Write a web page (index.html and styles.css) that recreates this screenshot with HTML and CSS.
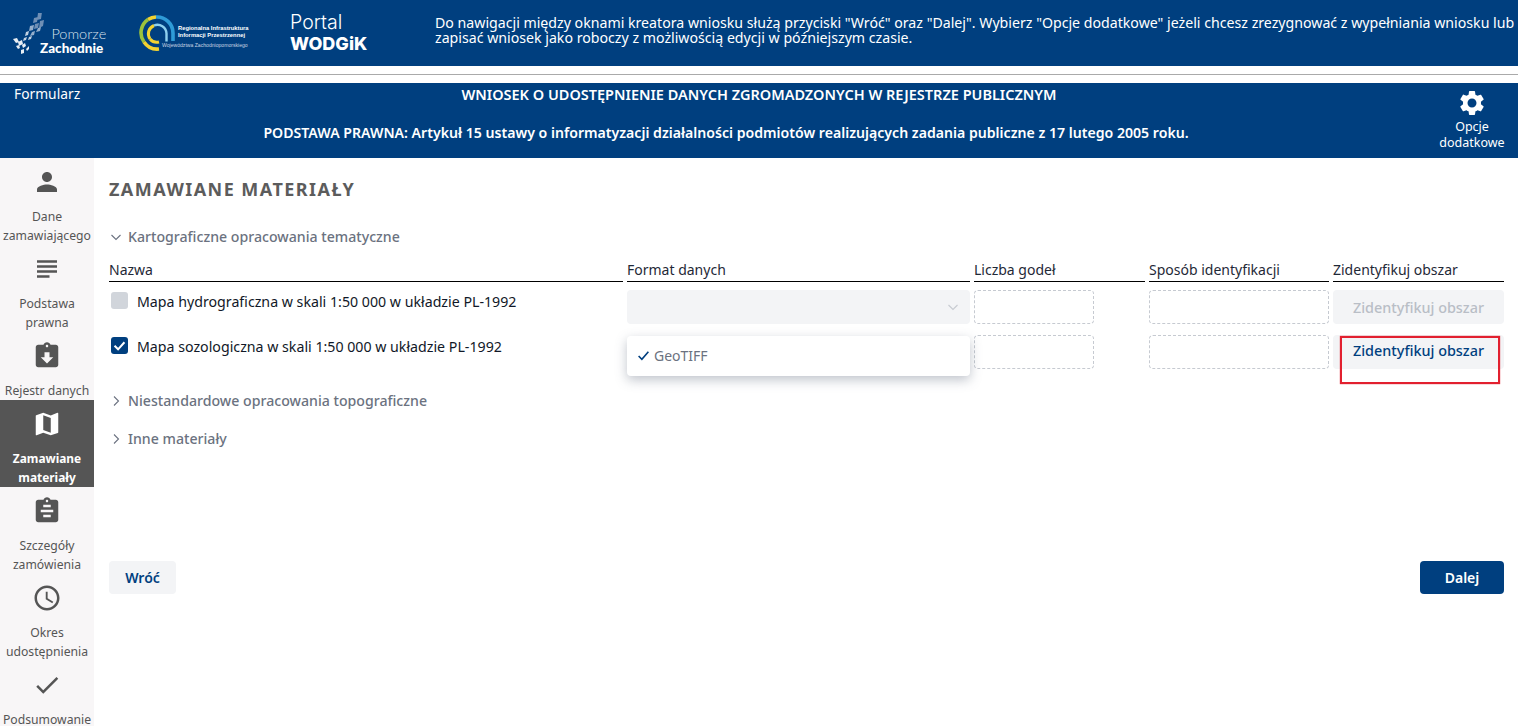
FILE: index.html
```html
<!DOCTYPE html>
<html lang="pl">

<head>
  <meta charset="UTF-8">
  <meta name="viewport" content="width=device-width, initial-scale=1.0">
  <title>Portal WODGiK - Formularz</title>
  <link rel="stylesheet" href="styles.css">
</head>

<body>
  <header class="top">
    <div class="logo-pomorze">
      <svg class="pomorze-mark" viewBox="0 0 32 42" width="32" height="42">
        <path fill="#6f8fb5" d="M25 0l4-1-1 7-4 1zM21 5l4-1-1 5-4 1zM27 8l4-1-1 6-4 2zM22 11l4-1-1 5-4 1z" />
        <path fill="#94aecb" d="M17 13l4-1-1 5-4 1zM25 15l3-1-1 4-4 1zM19 19l3-1-1 4-4 1z" />
        <path fill="#c3d2e2" d="M13 19l3-1-1 4-3 1zM16 24l3-1-1 3-3 1zM11 25l3-1-1 3-3 1z" />
        <path fill="#e8eef4" d="M0 26l4-1 2 4-3 1zM5 29l4-2 1 4-4 2zM9 32l3-2 1 3-3 2zM3 33l3-1 1 3-2 1zM8 37l3-1 0 4-3 1zM13 36l3-3 0 3-2 2z" />
      </svg>
      <div class="pomorze-text">
        <span class="pomorze-top">Pomorze</span>
        <span class="pomorze-bottom">Zachodnie</span>
      </div>
    </div>

    <div class="logo-riip">
      <svg viewBox="0 0 36 36" width="36" height="36" fill="none">
        <path stroke="#f2d231" stroke-width="3.600" d="M17 2A16 16 0 0 0 9 4.500" />
        <path stroke="#9cc33c" stroke-width="3.600" d="M9 4.500A16 16 0 0 0 5 27" />
        <path stroke="#f2d231" stroke-width="3.600" d="M5 27a16 16 0 0 0 15 7" />
        <path stroke="#2f9bd7" stroke-width="3.600" d="M17 2a16 16 0 0 1 17 16v8" />
        <path stroke="#f2d231" stroke-width="3" d="M15 10.500a9 9 0 0 0-4 13.500" />
        <path stroke="#f2d231" stroke-width="3" d="M11 24a9 9 0 0 0 9 3" />
        <path stroke="#8fd0ee" stroke-width="2.400" d="M15 10.500a9 9 0 0 1 12.500 8v8" />
      </svg>
      <div class="riip-text">
        <span class="riip-name">Regionalna Infrastruktura</span>
        <span class="riip-name">Informacji Przestrzennej</span>
        <span class="riip-sub">Województwa Zachodniopomorskiego</span>
      </div>
    </div>

    <div class="logo-portal">
      <span class="portal-top">Portal</span>
      <span class="portal-bottom">WODGiK</span>
    </div>

    <p class="top-info">Do nawigacji między oknami kreatora wniosku służą przyciski "Wróć" oraz "Dalej". Wybierz "Opcje dodatkowe" jeżeli chcesz zrezygnować z wypełniania wniosku lub<br>zapisać wniosek jako roboczy z możliwością edycji w późniejszym czasie.</p>
  </header>

  <div class="divider"></div>

  <section class="form-bar">
    <div class="form-bar-main">
      <div class="form-bar-row">
        <span class="form-bar-name">Formularz</span>
        <strong class="form-bar-title">WNIOSEK O UDOSTĘPNIENIE DANYCH ZGROMADZONYCH W REJESTRZE PUBLICZNYM</strong>
      </div>
      <strong class="form-bar-law">PODSTAWA PRAWNA: Artykuł 15 ustawy o informatyzacji działalności podmiotów realizujących zadania publiczne z 17 lutego 2005 roku.</strong>
    </div>
    <div class="options">
      <svg class="icon" viewBox="0 0 24 24"><path d="M19.14 12.94c.04-.3.06-.61.06-.94 0-.32-.02-.64-.07-.94l2.03-1.58c.18-.14.23-.41.12-.61l-1.92-3.32c-.12-.22-.37-.29-.59-.22l-2.39.96c-.5-.38-1.03-.7-1.62-.94l-.36-2.54c-.04-.24-.24-.41-.48-.41h-3.84c-.24 0-.43.17-.47.41l-.36 2.54c-.59.24-1.13.57-1.62.94l-2.39-.96c-.22-.08-.47 0-.59.22L2.74 8.87c-.12.21-.08.47.12.61l2.03 1.58c-.05.3-.09.63-.09.94s.02.64.07.94l-2.03 1.58c-.18.14-.23.41-.12.61l1.92 3.32c.12.22.37.29.59.22l2.39-.96c.5.38 1.03.7 1.62.94l.36 2.54c.05.24.24.41.48.41h3.84c.24 0 .44-.17.47-.41l.36-2.54c.59-.24 1.13-.56 1.62-.94l2.39.96c.22.08.47 0 .59-.22l1.92-3.32c.12-.22.07-.47-.12-.61l-2.01-1.58zM12 15.6c-1.98 0-3.6-1.62-3.6-3.6s1.62-3.6 3.6-3.6 3.6 1.62 3.6 3.6-1.62 3.6-3.6 3.6z" /></svg>
      <span>Opcje dodatkowe</span>
    </div>
  </section>

  <div class="layout">
    <nav class="side">
      <a class="side-item">
        <svg class="icon" viewBox="0 0 24 24"><path d="M12 12c2.21 0 4-1.79 4-4s-1.79-4-4-4-4 1.790-4 4 1.790 4 4 4zm0 2c-2.670 0-8 1.340-8 4v2h16v-2c0-2.660-5.330-4-8-4z" /></svg>
        <span>Dane zamawiającego</span>
      </a>
      <a class="side-item">
        <svg class="icon" viewBox="0 0 24 24"><path d="M14 17H4v2h10v-2zm6-8H4v2h16V9zM4 15h16v-2H4v2zM4 5v2h16V5H4z" /></svg>
        <span>Podstawa prawna</span>
      </a>
      <a class="side-item">
        <svg class="icon" viewBox="0 0 24 24"><path d="M19 3h-4.180C14.400 1.840 13.300 1 12 1c-1.300 0-2.400.84-2.820 2H5c-1.100 0-2 .9-2 2v14c0 1.100.9 2 2 2h14c1.100 0 2-.9 2-2V5c0-1.100-.9-2-2-2zm-7 0c.55 0 1 .45 1 1s-.45 1-1 1-1-.45-1-1 .45-1 1-1zm0 15l-5-5h3V9h4v4h3l-5 5z" /></svg>
        <span>Rejestr danych</span>
      </a>
      <a class="side-item active">
        <svg class="icon" viewBox="0 0 24 24"><path d="M20.500 3l-.16.03L15 5.100 9 3 3.360 4.900c-.21.07-.36.25-.36.48V20.500c0 .28.22.5.5.5l.16-.03L9 18.900l6 2.100 5.640-1.900c.21-.07.36-.25.36-.48V3.500c0-.28-.22-.5-.5-.5zM15 19l-6-2.110V5l6 2.110V19z" /></svg>
        <span>Zamawiane materiały</span>
      </a>
      <a class="side-item">
        <svg class="icon" viewBox="0 0 24 24"><path d="M19 3h-4.180C14.400 1.840 13.300 1 12 1c-1.300 0-2.400.84-2.820 2H5c-1.100 0-2 .9-2 2v14c0 1.100.9 2 2 2h14c1.100 0 2-.9 2-2V5c0-1.100-.9-2-2-2zm-7 0c.55 0 1 .45 1 1s-.45 1-1 1-1-.45-1-1 .45-1 1-1zm3 14H9v-2h6v2zm2-4H7v-2h10v2zm-2-4H9V7h6v2z" /></svg>
        <span>Szczegóły zamówienia</span>
      </a>
      <a class="side-item">
        <svg class="icon" viewBox="0 0 24 24"><path d="M11.990 2C6.470 2 2 6.480 2 12s4.470 10 9.990 10C17.520 22 22 17.520 22 12S17.520 2 11.990 2zM12 20c-4.420 0-8-3.580-8-8s3.580-8 8-8 8 3.580 8 8-3.580 8-8 8zm.5-13H11v6l5.250 3.150.75-1.230-4.500-2.670z" /></svg>
        <span>Okres udostępnienia</span>
      </a>
      <a class="side-item">
        <svg class="icon" viewBox="0 0 24 24"><path d="M9 16.170L4.830 12l-1.420 1.410L9 19 21 7l-1.410-1.410z" /></svg>
        <span>Podsumowanie</span>
      </a>
    </nav>

    <main class="content">
      <h2>ZAMAWIANE MATERIAŁY</h2>

      <div class="group-title">
        <svg class="chevron" viewBox="0 0 12 12"><path d="M1.500 4l4.500 4.500L10.500 4" /></svg>
        Kartograficzne opracowania tematyczne
      </div>

      <div class="materials">
        <div class="col-head">Nazwa</div>
        <div class="col-head">Format danych</div>
        <div class="col-head">Liczba godeł</div>
        <div class="col-head">Sposób identyfikacji</div>
        <div class="col-head">Zidentyfikuj obszar</div>

        <div class="name"><span class="check"></span>Mapa hydrograficzna w skali 1:50 000 w układzie PL-1992</div>
        <div class="select">
          <svg class="chevron" viewBox="0 0 12 12"><path d="M1.500 4l4.500 4.500L10.500 4" /></svg>
        </div>
        <div class="dashed dashed-short"></div>
        <div class="dashed"></div>
        <button class="btn-area" disabled>Zidentyfikuj obszar</button>

        <div class="name"><span class="check checked"><svg viewBox="0 0 12 12"><path d="M2.500 6.200l2.500 2.500 4.500-5" /></svg></span>Mapa sozologiczna w skali 1:50 000 w układzie PL-1992</div>
        <div class="select-open">
          <div class="dropdown">
            <svg viewBox="0 0 12 12"><path d="M1.500 6.500l3 3 6-7" /></svg>
            GeoTIFF
          </div>
        </div>
        <div class="dashed dashed-short"></div>
        <div class="dashed"></div>
        <div class="area-cell">
          <button class="btn-area btn-area-active">Zidentyfikuj obszar</button>
          <div class="red-box"></div>
        </div>
      </div>

      <div class="group-title group-next">
        <svg class="chevron" viewBox="0 0 12 12"><path d="M4 1.500L8.500 6 4 10.500" /></svg>
        Niestandardowe opracowania topograficzne
      </div>
      <div class="group-title group-last">
        <svg class="chevron" viewBox="0 0 12 12"><path d="M4 1.500L8.500 6 4 10.500" /></svg>
        Inne materiały
      </div>

      <div class="actions">
        <button class="btn-back">Wróć</button>
        <button class="btn-next">Dalej</button>
      </div>
    </main>
  </div>
</body>

</html>
```
FILE: styles.css
```css
* {
  margin: 0;
  padding: 0;
  box-sizing: border-box;
}

html,
body {
  height: 100%;
  overflow: hidden;
}

body {
  font-family: "Noto Sans", "Open Sans", sans-serif;
  font-size: 14px;
  color: #111827;
  background-color: #ffffff;
}

/* top header */
.top {
  display: flex;
  align-items: center;
  height: 66px;
  background-color: #003f7f;
  color: #ffffff;
}

.logo-pomorze {
  display: flex;
  align-items: flex-end;
  width: 139px;
  padding-left: 13px;
  padding-top: 2px;
}

.pomorze-mark {
  flex: none;
}

.pomorze-text {
  display: flex;
  flex-direction: column;
  align-items: flex-end;
  margin-left: -5px;
  line-height: 14px;
}

.pomorze-top {
  margin-right: -3px;
  font-family: "Lato", sans-serif;
  font-size: 14.500px;
  font-weight: 300;
  color: #d8e2ec;
}

.pomorze-bottom {
  font-family: "Lato", sans-serif;
  font-size: 13.500px;
  font-weight: 900;
}

.logo-riip {
  display: flex;
  align-items: center;
  width: 151px;
}

.logo-riip svg {
  flex: none;
}

.riip-text {
  display: flex;
  flex-direction: column;
  margin-left: 3px;
  padding-top: 8px;
  font-family: "Liberation Sans", sans-serif;
  line-height: 7px;
}

.riip-name {
  font-size: 5.800px;
  font-weight: 700;
  white-space: nowrap;
}

.riip-sub {
  margin-top: 3px;
  margin-left: -16px;
  font-size: 5.100px;
  color: #c8d6e4;
  white-space: nowrap;
}

.logo-portal {
  display: flex;
  flex-direction: column;
  width: 145px;
  line-height: 21px;
  font-family: "Inter", sans-serif;
}

.portal-top {
  font-size: 19.500px;
  font-weight: 300;
}

.portal-bottom {
  font-size: 18px;
  font-weight: 800;
}

.top-info {
  margin-bottom: 7px;
  font-size: 14.170px;
  line-height: 15px;
  white-space: nowrap;
}

.divider {
  height: 17px;
  padding-top: 8px;
}

.divider::before {
  content: "";
  display: block;
  border-top: 1px solid #aaaaaa;
}

/* blue bar */
.form-bar {
  display: flex;
  height: 75px;
  background-color: #003f7f;
  color: #ffffff;
}

.form-bar-main {
  flex: 1;
  min-width: 0;
}

.form-bar-row {
  display: grid;
  grid-template-columns: 1fr auto 1fr;
  margin-right: -79px;
  padding: 1px 14px 0;
  line-height: 20px;
}

.form-bar-name {
  font-size: 13.800px;
}

.form-bar-title {
  font-weight: 600;
  font-size: 14.500px;
}

.form-bar-law {
  display: block;
  margin-top: 19px;
  padding-left: 13px;
  line-height: 20px;
  text-align: center;
  font-weight: 600;
  font-size: 14.120px;
}

.options {
  flex: none;
  width: 66px;
  margin-right: 13px;
  padding-top: 5px;
  text-align: center;
  font-size: 12.500px;
  line-height: 16px;
}

.options .icon {
  display: block;
  margin: 0 auto 1px;
  fill: #ffffff;
}

.icon {
  width: 30px;
  height: 30px;
}

/* sidebar + content */
.layout {
  display: flex;
  height: 568px;
}

.side {
  flex: none;
  width: 94px;
  background-color: #f8f6f7;
}

.side-item {
  display: block;
  padding-top: 9px;
  text-align: center;
  font-size: 12.200px;
  line-height: 19px;
  color: #555555;
}

.side-item .icon {
  display: block;
  margin: 0 auto 10px;
  fill: #555555;
}

.side-item.active {
  background-color: #555555;
  color: #ffffff;
  font-size: 11.900px;
  font-weight: 700;
}

.side-item.active .icon {
  fill: #ffffff;
}

.content {
  flex: 1;
  min-width: 0;
  padding: 19px 14px 0 15px;
}

h2 {
  font-size: 18px;
  line-height: 24px;
  font-weight: 700;
  letter-spacing: 1.450px;
  color: #5c5c5c;
}

.group-title {
  display: flex;
  align-items: center;
  gap: 6px;
  margin-top: 26px;
  padding-left: 1px;
  font-size: 14.150px;
  line-height: 20px;
  font-weight: 500;
  color: #6b7280;
}

.group-next {
  margin-top: 22px;
}

.group-last {
  margin-top: 18px;
}

.chevron {
  width: 12px;
  height: 12px;
  fill: none;
  stroke: #6b7280;
  stroke-width: 1.100;
}

/* table of materials */
.materials {
  display: grid;
  grid-template-columns: 514px 343px 171px 180px 171px;
  grid-template-rows: 19px 34px 34px;
  column-gap: 4px;
  row-gap: 11px;
  margin-top: 13px;
}

.col-head {
  height: 22px;
  border-bottom: 1px solid #000000;
  line-height: 20px;
  color: #1f2937;
}

.name {
  display: flex;
  align-items: flex-start;
  gap: 9px;
  padding: 2px 0 0 2px;
  font-size: 14.200px;
  line-height: 19px;
  color: #111827;
}

.check {
  flex: none;
  display: block;
  width: 17px;
  height: 17px;
  border-radius: 3px;
  background-color: #d1d5db;
}

.check svg {
  display: block;
  fill: none;
  stroke: #ffffff;
  stroke-width: 1.400;
}

.check.checked {
  background-color: #003f7f;
}

.select {
  display: flex;
  align-items: center;
  justify-content: flex-end;
  padding-right: 11px;
  border-radius: 4px;
  background-color: #f3f4f6;
}

.select .chevron {
  stroke: #c7cbd1;
}

.select-open {
  position: relative;
}

.dropdown {
  position: absolute;
  top: 1px;
  left: 0;
  right: 0;
  z-index: 2;
  display: flex;
  align-items: center;
  gap: 4px;
  height: 40px;
  padding-bottom: 1px;
  padding-left: 10px;
  border-radius: 4px;
  background-color: #ffffff;
  box-shadow: 0 4px 12px rgba(75, 85, 110, 0.35);
  color: #6b7280;
}

.dropdown svg {
  width: 13px;
  height: 13px;
  fill: none;
  stroke: #003f7f;
  stroke-width: 1.500;
}

.dashed {
  border: 1px dashed #c6cad1;
  border-radius: 4px;
}

.dashed-short {
  width: 120px;
}

.btn-area {
  width: 100%;
  height: 34px;
  border: none;
  border-radius: 4px;
  background-color: #f3f4f6;
  font-family: inherit;
  font-size: 14.400px;
  font-weight: 500;
  color: #003f7f;
}

.btn-area:disabled {
  color: #b9bec6;
}

.btn-area-active {
  padding-bottom: 3px;
}

.area-cell {
  position: relative;
}

.red-box {
  position: absolute;
  top: 1px;
  left: 7px;
  width: 160px;
  height: 48px;
  border: 2px solid #e2202f;
  box-shadow: 0 0 1px #e2202f;
}

.actions {
  display: flex;
  justify-content: space-between;
  margin-top: 112px;
}

.btn-back,
.btn-next {
  height: 33px;
  border: none;
  border-radius: 4px;
  font-family: inherit;
  font-size: 14px;
  font-weight: 600;
}

.btn-back {
  width: 67px;
  background-color: #f3f4f6;
  color: #003f7f;
}

.btn-next {
  width: 84px;
  background-color: #003f7f;
  color: #ffffff;
}
```
